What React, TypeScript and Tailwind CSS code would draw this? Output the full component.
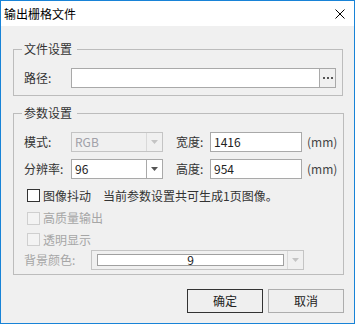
import React from 'react';

const Arrow: React.FC<{ disabled?: boolean }> = ({ disabled }) => (
  <svg width="7" height="4" viewBox="0 0 7 4">
    <path d="M0 0H7L3.5 4Z" fill={disabled ? '#c4c4c4' : '#555'} />
  </svg>
);

const Select: React.FC<{ value: string; disabled?: boolean }> = ({ value, disabled }) => (
  <div
    className={`flex h-[20px] w-[92px] border ${
      disabled ? 'border-[#c4c4c4] bg-[#f0f0f0] text-[#a0a0a8]' : 'border-[#a9a9a9] bg-white text-[#222]'
    }`}
  >
    <div className="flex-1 pl-[3px] leading-[18px]">{value}</div>
    <div
      className={`w-[16px] border-l flex items-center justify-center ${
        disabled ? 'border-[#d9d9d9]' : 'border-[#a9a9a9]'
      }`}
    >
      <Arrow disabled={disabled} />
    </div>
  </div>
);

const TextBox: React.FC<{ value: string }> = ({ value }) => (
  <div className="h-[20px] w-[92px] border border-[#a9a9a9] bg-white pl-[3px] leading-[18px] text-[#222]">
    {value}
  </div>
);

const Check: React.FC<{ disabled?: boolean }> = ({ disabled }) => (
  <span
    className={`block w-[13px] h-[13px] border ${
      disabled ? 'border-[#cfcfcf] bg-[#f3f3f3]' : 'border-[#333] bg-white'
    }`}
  />
);

export default function App() {
  return (
    <div className="w-[355px] h-[324px] border border-[#1883d7] bg-[#f0f0f0] flex flex-col font-['Noto_Sans_CJK_SC','Microsoft_YaHei',sans-serif] text-[12px] text-[#333]">
      {/* Title bar */}
      <div className="h-[25px] bg-white flex items-center justify-between pl-[3px] pr-[9px] text-black">
        <span className="leading-[16px]">输出栅格文件</span>
        <svg width="10" height="10" viewBox="0 0 10 10">
          <path d="M0.5 0.5L9.5 9.5M9.5 0.5L0.5 9.5" stroke="#000" strokeWidth="1" />
        </svg>
      </div>

      <div className="flex flex-col pl-[12px] pr-[11px]">
        {/* File settings */}
        <fieldset className="mt-[15px] border border-[#bcbcbc] pl-[10px] pr-[6px] pt-[11px] pb-[7px]">
          <legend className="ml-[-2px] pl-[2px] pr-[5px] leading-[16px]">文件设置</legend>
          <div className="flex items-center h-[20px]">
            <span className="w-[47px]">路径:</span>
            <div className="flex h-[20px] w-[265px] border border-[#a9a9a9] bg-white">
              <div className="flex-1" />
              <div className="w-[16px] border-l border-[#a9a9a9] bg-[#f0f0f0] flex items-center justify-center gap-[2px]">
                <span className="block w-[2px] h-[2px] bg-[#555]" />
                <span className="block w-[2px] h-[2px] bg-[#555]" />
                <span className="block w-[2px] h-[2px] bg-[#555]" />
              </div>
            </div>
          </div>
        </fieldset>

        {/* Parameter settings */}
        <fieldset className="mt-[9px] border border-[#bcbcbc] pl-[10px] pr-[6px] pt-[11px] pb-[4px]">
          <legend className="ml-[-2px] pl-[2px] pr-[5px] leading-[16px]">参数设置</legend>

          <div className="flex items-center h-[20px]">
            <span className="w-[47px]">模式:</span>
            <Select value="RGB" disabled />
            <span className="ml-[13px] w-[34px]">宽度:</span>
            <TextBox value="1416" />
            <span className="ml-[5px] text-[#444]">(mm)</span>
          </div>

          <div className="flex items-center h-[20px] mt-[7px]">
            <span className="w-[47px]">分辨率:</span>
            <Select value="96" />
            <span className="ml-[13px] w-[34px]">高度:</span>
            <TextBox value="954" />
            <span className="ml-[5px] text-[#444]">(mm)</span>
          </div>

          <div className="flex items-center h-[23px] mt-[5px]">
            <span className="ml-[3px]">
              <Check />
            </span>
            <span className="ml-[3px] w-[60px]">图像抖动</span>
            <span>当前参数设置共可生成1页图像。</span>
          </div>

          <div className="flex items-center h-[22px] text-[#a6a6a6]">
            <span className="ml-[3px]">
              <Check disabled />
            </span>
            <span className="ml-[3px]">高质量输出</span>
          </div>

          <div className="flex items-center h-[21px] text-[#a6a6a6]">
            <span className="ml-[3px]">
              <Check disabled />
            </span>
            <span className="ml-[3px]">透明显示</span>
          </div>

          <div className="flex items-center h-[20px]">
            <span className="w-[67px] text-[#a6a6a6]">背景颜色:</span>
            <div className="flex h-[20px] w-[213px] border border-[#c4c4c4] pl-[5px]">
              <div className="mt-[3px] h-[12px] w-[187px] border border-[#a0a0a0] bg-white text-center text-[#222] leading-[10px]">
                9
              </div>
              <div className="ml-[3px] w-[16px] border-l border-[#d9d9d9] flex items-center justify-center">
                <Arrow disabled />
              </div>
            </div>
          </div>
        </fieldset>

        {/* Buttons */}
        <div className="flex justify-end gap-[5px] mt-[14px] mr-[-1px]">
          <button className="w-[76px] h-[24px] border border-[#333] bg-[#efefef] text-[#222] leading-[22px]">
            确定
          </button>
          <button className="w-[76px] h-[24px] border border-[#adadad] bg-[#efefef] text-[#222] leading-[22px]">
            取消
          </button>
        </div>
      </div>
    </div>
  );
}
